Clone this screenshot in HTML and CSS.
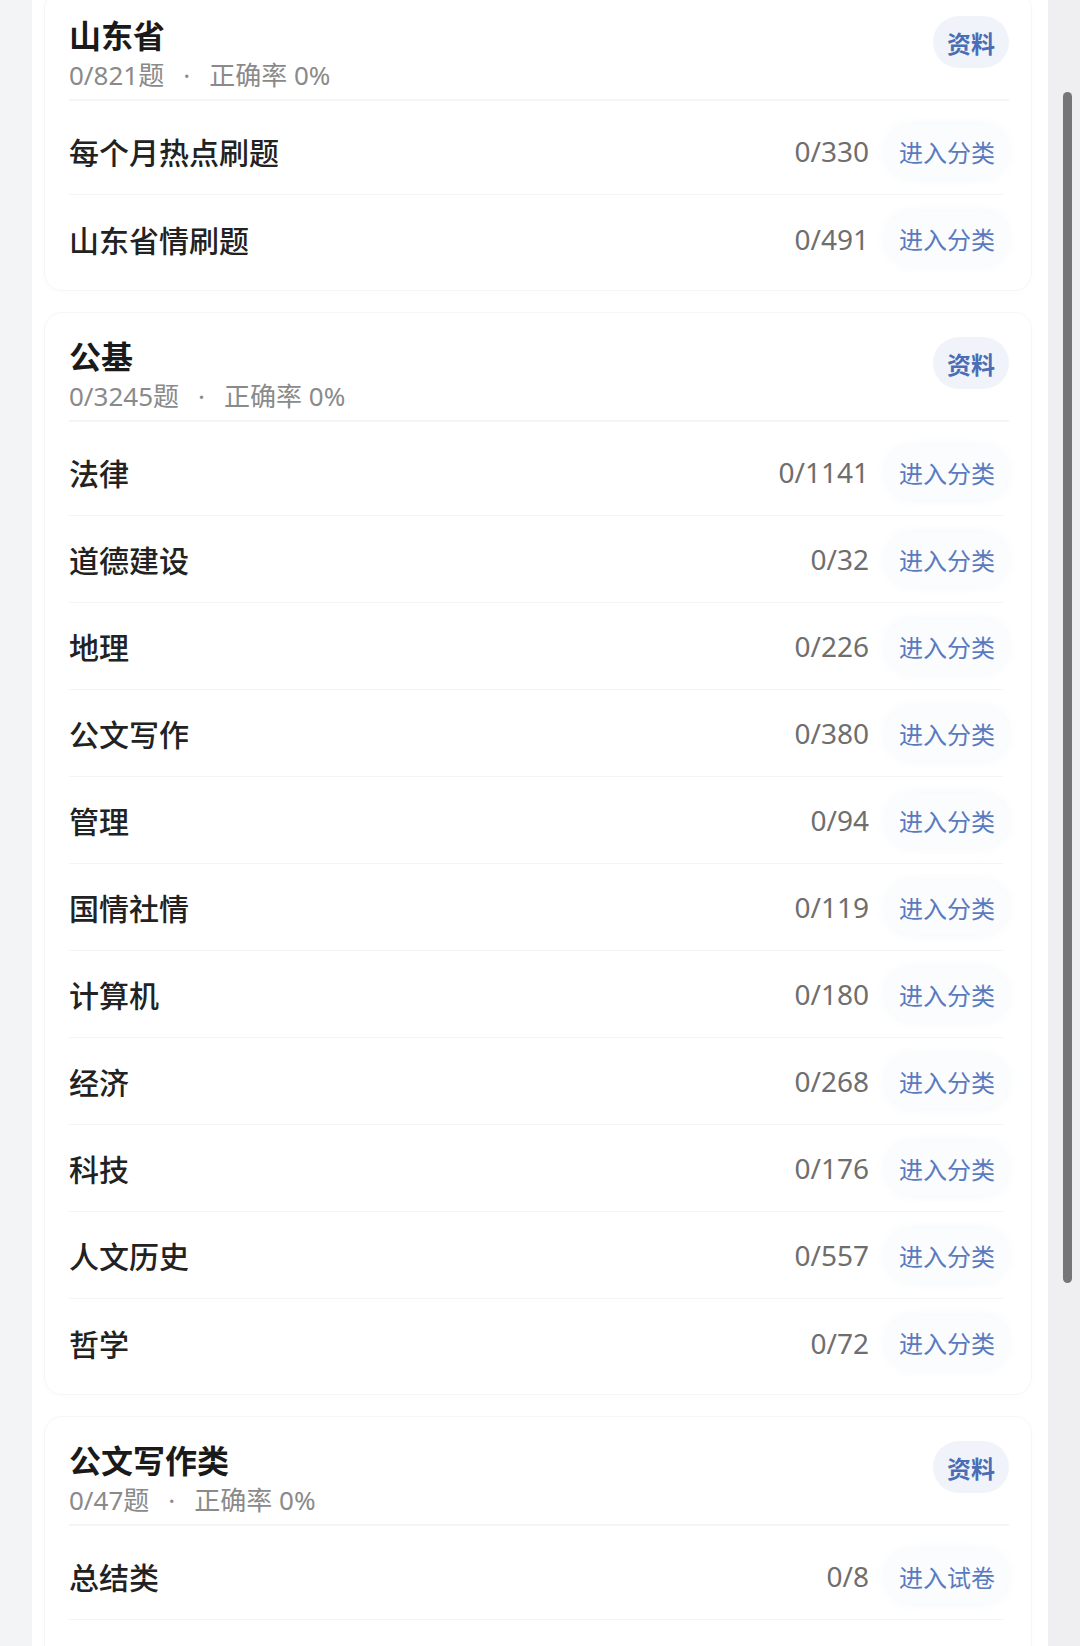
FILE: index.html
```html
<!DOCTYPE html>
<html lang="zh-CN">
<head>
  <meta charset="UTF-8" />
  <meta name="viewport" content="width=device-width, initial-scale=1.0" />
  <title>题库分类</title>
  <link rel="stylesheet" href="styles.css">
</head>
<body>
  <div class="page">
    <div class="gutter"></div>

    <div class="panel">
      <div class="list">

        <div class="card">
          <div class="card-head">
            <div>
              <div class="title">山东省</div>
              <div class="sub"><span>0/821题</span><span class="dot">·</span><span>正确率 0%</span></div>
            </div>
            <div class="badge">资料</div>
          </div>
          <div class="rows">
            <div class="row"><span class="name">每个月热点刷题</span><span class="count">0/330</span><span class="go">进入分类</span></div>
            <div class="row"><span class="name">山东省情刷题</span><span class="count">0/491</span><span class="go">进入分类</span></div>
          </div>
        </div>

        <div class="card">
          <div class="card-head">
            <div>
              <div class="title">公基</div>
              <div class="sub"><span>0/3245题</span><span class="dot">·</span><span>正确率 0%</span></div>
            </div>
            <div class="badge">资料</div>
          </div>
          <div class="rows">
            <div class="row"><span class="name">法律</span><span class="count">0/1141</span><span class="go">进入分类</span></div>
            <div class="row"><span class="name">道德建设</span><span class="count">0/32</span><span class="go">进入分类</span></div>
            <div class="row"><span class="name">地理</span><span class="count">0/226</span><span class="go">进入分类</span></div>
            <div class="row"><span class="name">公文写作</span><span class="count">0/380</span><span class="go">进入分类</span></div>
            <div class="row"><span class="name">管理</span><span class="count">0/94</span><span class="go">进入分类</span></div>
            <div class="row"><span class="name">国情社情</span><span class="count">0/119</span><span class="go">进入分类</span></div>
            <div class="row"><span class="name">计算机</span><span class="count">0/180</span><span class="go">进入分类</span></div>
            <div class="row"><span class="name">经济</span><span class="count">0/268</span><span class="go">进入分类</span></div>
            <div class="row"><span class="name">科技</span><span class="count">0/176</span><span class="go">进入分类</span></div>
            <div class="row"><span class="name">人文历史</span><span class="count">0/557</span><span class="go">进入分类</span></div>
            <div class="row"><span class="name">哲学</span><span class="count">0/72</span><span class="go">进入分类</span></div>
          </div>
        </div>

        <div class="card tail">
          <div class="card-head">
            <div>
              <div class="title">公文写作类</div>
              <div class="sub"><span>0/47题</span><span class="dot">·</span><span>正确率 0%</span></div>
            </div>
            <div class="badge">资料</div>
          </div>
          <div class="rows">
            <div class="row more"><span class="name">总结类</span><span class="count">0/8</span><span class="go">进入试卷</span></div>
          </div>
        </div>

      </div>
    </div>

    <div class="track">
      <div class="thumb"></div>
    </div>
  </div>
</body>
</html>
```

FILE: styles.css
```css
body {
  margin: 0;
  background: #f3f4f6;
  font-family: "Noto Sans", "Noto Sans CJK SC", sans-serif;
  color: #1b1b1b;
}
.page {
  display: flex;
  height: 1646px;
  overflow: hidden;
}
.gutter {
  width: 32px;
  flex-shrink: 0;
  background: #f3f4f6;
}
.panel {
  flex: 1;
  background: #fff;
  overflow: hidden;
}
.list {
  margin-top: -9px;
}
.card {
  margin: 0 16px 21px 12px;
  padding: 24px 22px 8px 24px;
  background: #fff;
  border: 1px solid #f5f6f7;
  border-radius: 18px;
  box-shadow: 0 1px 6px rgba(0, 0, 0, 0.015);
}
.card.tail {
  padding-bottom: 120px;
}
.card-head {
  display: flex;
  justify-content: space-between;
  align-items: flex-start;
  padding-bottom: 8px;
  border-bottom: 2px solid #f4f5f6;
}
.title {
  font-size: 32px;
  line-height: 40px;
  font-weight: 700;
  color: #1a1a1a;
}
.sub {
  margin-top: 3px;
  font-size: 26px;
  line-height: 32px;
  color: #8a8a8a;
}
.dot {
  margin: 0 19px;
}
.badge {
  height: 52px;
  padding: 0 14px;
  border-radius: 26px;
  background: #f0f4fa;
  color: #4a6db5;
  font-size: 24px;
  font-weight: 700;
  display: flex;
  align-items: center;
}
.rows {
  padding-top: 7px;
}
.row {
  height: 87px;
  box-sizing: border-box;
  display: flex;
  align-items: center;
  border-bottom: 1px solid #f3f4f5;
  margin-right: 6px;
}
.row:last-child {
  border-bottom: 0;
}
.row.more {
  border-bottom: 1px solid #f3f4f5;
}
.name {
  flex: 1;
  font-size: 30px;
  font-weight: 500;
  color: #222;
}
.count {
  font-size: 28px;
  color: #6e6e6e;
}
.go {
  margin-left: 16px;
  margin-right: -6px;
  padding: 10px 14px;
  border-radius: 28px;
  background: #fbfcfe;
  box-shadow: 0 0 10px rgba(228, 234, 245, 0.45);
  color: #5a7abf;
  font-size: 24px;
}
.track {
  width: 32px;
  flex-shrink: 0;
  background: #efeff1;
}
.thumb {
  width: 9px;
  height: 1191px;
  margin: 92px 0 0 15px;
  border-radius: 5px;
  background: #767678;
}
```
